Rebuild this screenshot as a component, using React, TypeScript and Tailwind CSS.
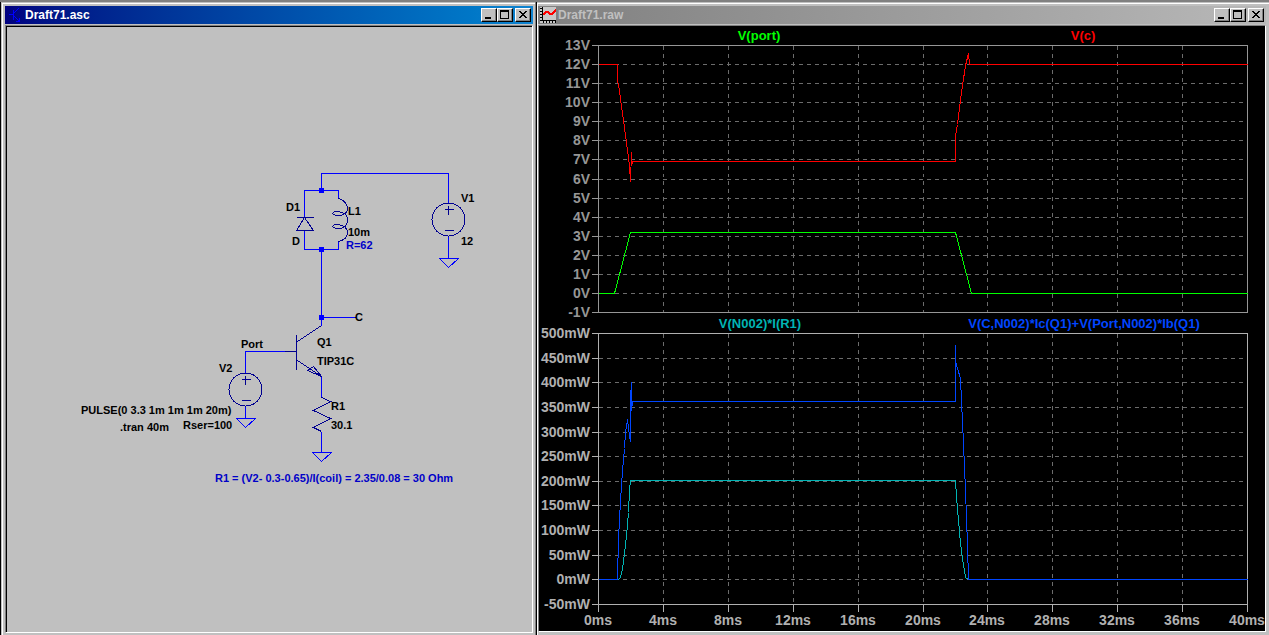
import type { ReactNode } from 'react';

type Point = [number, number];

const TIME_TICKS = [598, 663, 728, 793, 858, 923, 987, 1052, 1117, 1182, 1247];

const VOLT_TICKS = [45, 64, 83, 102, 121, 140, 159, 179, 198, 217, 236, 255, 274, 293, 312];
const POWER_TICKS = [333, 358, 382, 407, 432, 456, 481, 505, 530, 555, 579, 604];

const V_C: Point[] = [
  [598, 64], [617, 64], [617, 81], [618, 84], [623, 120], [629, 165], [630, 181],
  [631, 152], [631, 165], [632, 161], [955, 161], [955, 135], [957, 124], [961, 92],
  [965, 65], [968, 53], [969, 64], [1247, 64],
];
const V_PORT: Point[] = [[598, 293], [614, 293], [630, 232], [955, 232], [971, 293], [1247, 293]];
const P_R1: Point[] = [
  [598, 579], [618, 579], [620, 577], [622, 568], [624, 553], [626, 535], [628, 512],
  [629, 490], [630, 480], [955, 480], [956, 497], [958, 520], [960, 543], [962, 558],
  [965, 577], [968, 579],
];
const P_Q1: Point[] = [
  [598, 579], [617, 579], [618, 538], [620, 500], [622, 470], [624, 448], [625, 432],
  [627, 419], [629, 436], [630, 441], [630, 398], [631, 382], [631, 410], [632, 401],
  [955, 401], [955, 344], [955, 361], [957, 368], [960, 378], [961, 400], [963, 443],
  [965, 490], [967, 545], [968, 579], [1247, 579],
];

function TitleButton({ label, children }: { label: string; children: ReactNode }) {
  return (
    <button
      aria-label={label}
      className="h-[14px] w-4 border border-t-white border-l-white border-r-black border-b-black bg-[#c0c0c0] shadow-[inset_-1px_-1px_0_#808080]"
    >
      <svg viewBox="0 0 14 12" className="block h-3 w-[14px]" shapeRendering="crispEdges">
        {children}
      </svg>
    </button>
  );
}

function TitleButtons() {
  return (
    <div className="ml-auto flex pr-[2px]">
      <TitleButton label="Minimize">
        <path d="M3 8h6v2H3z" />
      </TitleButton>
      <TitleButton label="Maximize">
        <path d="M2 1h9v9H2zM3 3v6h7V3z" fillRule="evenodd" />
      </TitleButton>
      <div className="w-[2px]" />
      <TitleButton label="Close">
        <path d="M3 2h2v1h1v1h2V3h1V2h2v1h-1v1H9v1H8v1h1v1h1v1h1v1H9V8H8V7H6v1H5v1H3V8h1V7h1V6h1V5H5V4H4V3H3z" />
      </TitleButton>
    </div>
  );
}

type WindowProps = {
  title: string;
  icon: ReactNode;
  barClass: string;
  frameClass: string;
  bodyClass: string;
  children: ReactNode;
};

function MdiWindow({ title, icon, barClass, frameClass, bodyClass, children }: WindowProps) {
  return (
    <section className={`flex min-h-0 min-w-0 flex-col bg-[#c0c0c0] ${frameClass}`}>
      <header className={`flex h-[18px] shrink-0 items-center bg-linear-to-r ${barClass}`}>
        {icon}
        <h1 className="text-xs leading-4 font-bold">{title}</h1>
        <TitleButtons />
      </header>
      <div className={`mt-px min-h-0 flex-1 border ${bodyClass}`}>{children}</div>
    </section>
  );
}

function Ground({ x, y }: { x: number; y: number }) {
  return <path d={`M${x - 9} ${y}h19l-10 9z`} />;
}

function Source({ x, y }: { x: number; y: number }) {
  return (
    <g stroke="#000090">
      <circle cx={x} cy={y} r="16.5" />
      <path d={`M${x - 4} ${y - 10}h9M${x} ${y - 14}v9M${x - 4} ${y + 11}h9`} />
    </g>
  );
}

function Schematic() {
  return (
    <svg viewBox="7 27 525 605" className="block h-full w-full" role="img" aria-label="Relay driver schematic">
      <g transform="translate(0.5 0.5)" fill="none" stroke="#0000ff" shapeRendering="crispEdges">
        <path d="M321 190V173H448V203M304 217V190H338V198M304 230V249H338V241M321 249V325M321 317H355" />
        <path d="M448 236V258M245 372V351H284M245 406V418M321 376V397M321 431V452" />
        <Ground x={448} y={258} />
        <Ground x={245} y={418} />
        <Ground x={321} y={452} />
        <Source x={448} y={219} />
        <Source x={245} y={389} />
        <g stroke="#000090">
          <path d="M296 217H313M304 217L313 230H296Z" />
          <path d="M338 198C350 202 350 215 338 215C330 215 331 210 338 211C344 212 347 214 347 220C347 226 342 228 338 228C330 228 331 223 338 224C350 226 350 238 338 241" />
          <path d="M284 351H296M296 334V369M321 325L297 341M297 360L321 376M321 376L307 370L313 366Z" />
          <path d="M321 397L330 401L313 410L330 418L313 427L321 431" />
        </g>
      </g>
      <g fill="#0000ff">
        <path d="M319 188h5v5h-5zM319 247h5v5h-5zM319 315h5v5h-5z" />
      </g>
      <g className="text-[11px] font-bold">
        <text x="286" y="211">D1</text>
        <text x="292" y="245">D</text>
        <text x="348" y="215">L1</text>
        <text x="348" y="236">10m</text>
        <text x="461" y="202">V1</text>
        <text x="461" y="245">12</text>
        <text x="355" y="321">C</text>
        <text x="317" y="346">Q1</text>
        <text x="317" y="365">TIP31C</text>
        <text x="241" y="348">Port</text>
        <text x="219" y="372">V2</text>
        <text x="331" y="410">R1</text>
        <text x="331" y="429">30.1</text>
        <text x="81" y="414">PULSE(0 3.3 1m 1m 1m 20m)</text>
        <text x="120" y="431">.tran 40m</text>
        <text x="183" y="429">Rser=100</text>
        <g fill="#0000c8">
          <text x="346" y="249">R=62</text>
          <text x="215" y="482">R1 = (V2- 0.3-0.65)/I(coil) = 2.35/0.08 = 30 Ohm</text>
        </g>
      </g>
    </svg>
  );
}

type PaneProps = {
  ticks: number[];
  labels: string[];
  color: string;
};

function Pane({ ticks, labels, color }: PaneProps) {
  const top = ticks[0];
  const bottom = ticks[ticks.length - 1];
  return (
    <g>
      <g transform="translate(0.5 0.5)" fill="none" shapeRendering="crispEdges">
        <g stroke="#6c6c6c" strokeDasharray="4 4">
          {ticks.slice(1, -1).map((y) => (
            <path key={y} d={`M598 ${y}H1247`} />
          ))}
          {TIME_TICKS.slice(1, -1).map((x) => (
            <path key={x} d={`M${x} ${top}V${bottom}`} />
          ))}
        </g>
        <g stroke={color}>
          {ticks.map((y) => (
            <path key={y} d={`M591 ${y}H598`} />
          ))}
          <path d={`M598 ${top}H1247V${bottom}H598Z`} />
        </g>
      </g>
      <g fill={color} textAnchor="end">
        {ticks.map((y, i) => (
          <text key={y} x="590" y={y + 5}>
            {labels[i]}
          </text>
        ))}
      </g>
    </g>
  );
}

function Trace({ points, color }: { points: Point[]; color: string }) {
  return <polyline points={points.map((p) => p.join(',')).join(' ')} stroke={color} />;
}

function Waveforms() {
  const volts = VOLT_TICKS.map((_, i) => `${13 - i}V`);
  const power = POWER_TICKS.map((_, i) => `${500 - i * 50}mW`);
  return (
    <svg viewBox="539 26 726 605" className="block h-full w-full" role="img" aria-label="Simulation waveforms">
      <g className="text-[14px] font-bold">
        <Pane ticks={VOLT_TICKS} labels={volts} color="#969696" />
        <Pane ticks={POWER_TICKS} labels={power} color="#b0b0b0" />
        <g fill="#b0b0b0" textAnchor="middle">
          {TIME_TICKS.map((x, i) => (
            <text key={x} x={x} y="625">
              {`${i * 4}ms`}
            </text>
          ))}
        </g>
      </g>
      <g transform="translate(0.5 0.5)" fill="none" shapeRendering="crispEdges">
        <path d={TIME_TICKS.map((x) => `M${x} 604V611`).join('')} stroke="#b0b0b0" />
        <Trace points={V_C} color="#ff0000" />
        <Trace points={V_PORT} color="#00ff00" />
        <Trace points={P_R1} color="#00b4b4" />
        <Trace points={P_Q1} color="#0046ff" />
      </g>
      <g className="text-[13px] font-bold" textAnchor="middle">
        <text x="759" y="40" fill="#00ff00">V(port)</text>
        <text x="1083" y="40" fill="#ff0000">V(c)</text>
        <text x="760" y="328" fill="#00b4b4">V(N002)*I(R1)</text>
        <text x="1084" y="328" fill="#0046ff">V(C,N002)*Ic(Q1)+V(Port,N002)*Ib(Q1)</text>
      </g>
    </svg>
  );
}

function TransistorIcon() {
  return (
    <svg viewBox="0 0 16 16" className="mr-1 h-4 w-4" shapeRendering="crispEdges">
      <g fill="#0000ff">
        <path d="M4 7h4v1H4zM8 3h1v10H8z" />
        <path d="M11 14h4v1h-4zM14 11h1v4h-1z" />
      </g>
      <path d="M9 6l5-5M9 9l5 5" stroke="#0000ff" fill="none" />
    </svg>
  );
}

function WaveIcon() {
  return (
    <svg viewBox="0 0 16 16" className="mr-[2px] ml-[2px] h-4 w-4" shapeRendering="crispEdges">
      <path d="M0 0h16v16H0z" fill="#c8c8c8" />
      <path d="M2 0h1v13h13v1H2zM0 1h2v1H0zM0 4h2v1H0zM0 7h2v1H0zM0 10h2v1H0zM0 13h2v1H0z" />
      <path d="M3 14h1v2H3zM6 14h1v2H6zM9 14h1v2H9zM12 14h1v2h-1zM15 14h1v2h-1z" />
      <path d="M3 8l3-3h2l2 2h2l4-4" stroke="#ff0000" strokeWidth="1.5" fill="none" />
    </svg>
  );
}

export default function App() {
  return (
    <main className="grid h-screen grid-cols-[536fr_733fr] overflow-hidden bg-[#808080] pt-[2px] font-['Liberation_Sans',Arial,sans-serif]">
      <div className="grid min-h-0 border-r border-l border-r-[#808080] border-l-black bg-[#c0c0c0] pt-px pl-px">
        <MdiWindow
          title="Draft71.asc"
          icon={<TransistorIcon />}
          frameClass="border-t border-l border-white pt-[2px] pr-[2px] pb-[2px] pl-[2px]"
          barClass="from-[#000080] to-[#1084d0] text-white"
          bodyClass="border-t-[#808080] border-l-[#808080] border-r-white border-b-white"
        >
          <div className="h-full border-t border-l border-black bg-[#c0c0c0]">
            <Schematic />
          </div>
        </MdiWindow>
      </div>
      <div className="grid min-h-0 border-l border-black bg-[#c0c0c0] pt-px">
        <MdiWindow
          title="Draft71.raw"
          icon={<WaveIcon />}
          frameClass="border-t border-l border-white pt-[2px] pr-[3px] pb-[3px]"
          barClass="from-[#808080] to-[#b8b8b8] text-[#c0c0c0]"
          bodyClass="border-t-[#808080] border-l-[#808080] border-r-white border-b-white bg-black"
        >
          <Waveforms />
        </MdiWindow>
      </div>
    </main>
  );
}
